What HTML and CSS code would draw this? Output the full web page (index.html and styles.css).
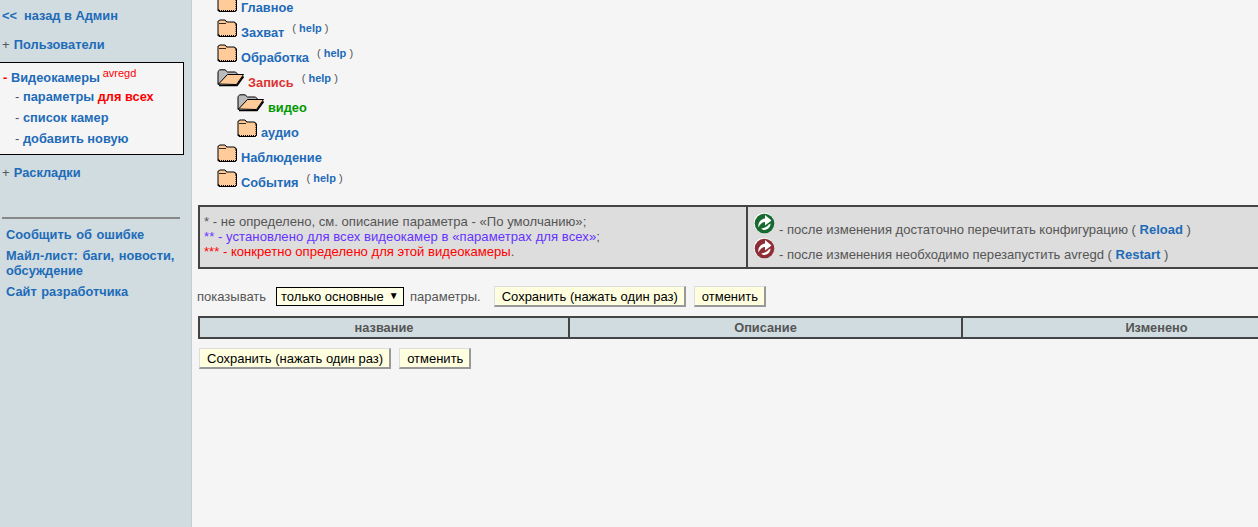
FILE: index.html
```html
<!DOCTYPE html>
<html lang="ru">
<head>
<meta charset="utf-8">
<title>Видеокамеры</title>
<link rel="stylesheet" href="styles.css">
</head>
<body>
<svg class="defs" width="0" height="0">
  <symbol id="closed" viewBox="0 0 20 18">
    <path d="M2 17.500L1 16.500V2.500L2.500 1H8L10 3H17.500L19.500 5V16.500L18.500 17.500Z" fill="#000" stroke="#000" stroke-width="1"/>
    <path d="M1.500 15V2.800L2.800 1.500H7.800L9.800 3.500H17L18.500 5V15L17.800 16H2.500Z" fill="#fc9"/>
    <path d="M2 4.500H9" stroke="#000" stroke-width=".8" fill="none"/>
    <path d="M3 16.500H18.500V6" stroke="#fc9" stroke-width="1" stroke-dasharray="1 1" fill="none"/>
  </symbol>
  <symbol id="open" viewBox="0 0 27 18">
    <path d="M1 15.500V2.500L2.800 .8H8L10.500 3H18.500L21 5.500H11L3 14.500Z" fill="#bbb" stroke="#000"/>
    <path d="M1.500 15L10.500 5.500H26.500L19.500 15.500Z" fill="#fc9" stroke="#000"/>
    <path d="M2 16.500H20L26.500 7.500" stroke="#000" stroke-width="1.600" fill="none"/>
  </symbol>
  <symbol id="cycle" viewBox="0 0 22 22">
    <circle cx="11" cy="11" r="10.700" fill="#fff" stroke="#ccc" stroke-width=".6"/>
    <circle cx="11.500" cy="11.500" r="9.800" fill="currentColor"/>
    <path d="M5.500 15.500C4.500 10.500 8 6.800 12 6.500V3L18.500 8.500L12 13.500V10C9 10 7 12.500 5.500 15.500Z" fill="#fff"/>
    <path d="M17.500 11.500C17.500 15.500 14.500 18 10.500 18L8 16.800C11 16 14.500 14.800 15.500 12.800Z" fill="#fff"/>
  </symbol>
</svg>
<div class="page">
  <nav class="side">
    <div class="side-top"><a href="#">&lt;&lt;&nbsp; назад в Админ</a></div>
    <div class="side-item"><span class="mark">+</span> <a href="#">Пользователи</a></div>
    <div class="side-box">
      <div class="box-head"><span class="red-mark">-</span> <a href="#">Видеокамеры</a> <sup class="tag">avregd</sup></div>
      <div class="box-row"><span class="mark">-</span> <a href="#">параметры <b class="hot">для всех</b></a></div>
      <div class="box-row"><span class="mark">-</span> <a href="#">список камер</a></div>
      <div class="box-row"><span class="mark">-</span> <a href="#">добавить новую</a></div>
    </div>
    <div class="side-item side-last"><span class="mark">+</span> <a href="#">Раскладки</a></div>
    <hr class="side-rule">
    <ul class="side-links">
      <li><a href="#">Сообщить об ошибке</a></li>
      <li><a href="#">Майл-лист: баги, новости, обсуждение</a></li>
      <li><a href="#">Сайт разработчика</a></li>
    </ul>
  </nav>
  <main class="main">
    <ul class="tree">
      <li class="node"><svg class="fold"><use href="#closed"/></svg><a href="#">Главное</a></li>
      <li class="node"><svg class="fold"><use href="#closed"/></svg><a href="#">Захват</a><span class="help">( <a href="#">help</a> )</span></li>
      <li class="node"><svg class="fold"><use href="#closed"/></svg><a href="#">Обработка</a><span class="help">( <a href="#">help</a> )</span></li>
      <li class="node"><svg class="fold-open"><use href="#open"/></svg><a class="cur" href="#">Запись</a><span class="help">( <a href="#">help</a> )</span></li>
      <li class="node sub"><svg class="fold-open"><use href="#open"/></svg><a class="cur-sub" href="#">видео</a></li>
      <li class="node sub"><svg class="fold"><use href="#closed"/></svg><a href="#">аудио</a></li>
      <li class="node"><svg class="fold"><use href="#closed"/></svg><a href="#">Наблюдение</a></li>
      <li class="node"><svg class="fold"><use href="#closed"/></svg><a href="#">События</a><span class="help">( <a href="#">help</a> )</span></li>
    </ul>
    <div class="legend">
      <div class="legend-left">
        <div>* - не определено, см. описание параметра - «По умолчанию»;</div>
        <div><span class="violet">** - установлено для всех видеокамер в «параметрах для всех»</span>;</div>
        <div><span class="red">*** - конкретно определено для этой видеокамеры</span>.</div>
      </div>
      <div class="legend-right">
        <div class="legend-line"><svg class="cyc green"><use href="#cycle"/></svg><span>- после изменения достаточно перечитать конфигурацию ( <a href="#">Reload</a> )</span></div>
        <div class="legend-line"><svg class="cyc maroon"><use href="#cycle"/></svg><span>- после изменения необходимо перезапустить avregd ( <a href="#">Restart</a> )</span></div>
      </div>
    </div>
    <div class="controls">
      <span>показывать</span>
      <span class="select">только основные<span class="arrow">▼</span></span>
      <span class="after">параметры.</span>
      <button class="btn btn-gap">Сохранить (нажать один раз)</button>
      <button class="btn">отменить</button>
    </div>
    <div class="thead">
      <div class="th th1">название</div>
      <div class="th th2">Описание</div>
      <div class="th th3">Изменено</div>
    </div>
    <div class="bottom">
      <button class="btn">Сохранить (нажать один раз)</button>
      <button class="btn">отменить</button>
    </div>
  </main>
</div>
</body>
</html>
```
FILE: styles.css
```css
* { box-sizing: border-box; }
html, body { margin: 0; height: 527px; overflow: hidden; }
body {
  background: #f5f5f5;
  color: #555;
  font-family: "Liberation Sans", Arial, sans-serif;
  font-size: 13px;
}
.defs { position: absolute; }
a { color: #1e6bb8; font-size: 12.8px; font-weight: bold; text-decoration: none; }
.page { display: flex; height: 527px; width: 1352px; }

.side {
  flex: 0 0 192px;
  background: #d0dce0;
  border-right: 1px solid #c4ced2;
  padding: 8px 0 0 0;
}
.side-top { padding-left: 2px; line-height: 15px; }
.side-item { padding-left: 2px; line-height: 15px; margin-top: 14px; }
.side-last { margin-top: 10px; }
.mark { color: #555; }
.side-item .mark { margin-right: .6px; }
.side-box {
  margin: 10px 0 0 -1px;
  width: 185px;
  height: 93px;
  background: #f5f5f5;
  border: 1px solid #000;
  padding: 7px 0 0 3px;
}
.box-head { line-height: 15px; white-space: nowrap; }
.red-mark { color: #f00; font-weight: bold; }
.tag { color: #f00; font-size: 11px; line-height: 0; vertical-align: 5px; font-weight: normal; }
.box-head a { margin-right: -1px; }
.box-row { padding-left: 12px; line-height: 15px; margin-top: 6px; }
.box-head + .box-row { margin-top: 4px; }
.hot { color: #f00; }
.side-rule { margin: 37px 11px 0 2px; height: 2px; border: 0; background: #888; }
.side-links { list-style: none; margin: 8px 0 0; padding: 0 10px 0 6px; word-spacing: 1px; }
.side-links li { line-height: 15px; margin-bottom: 6px; }

.main { flex: 1; padding-left: 5px; min-width: 0; }
.tree { list-style: none; margin: -8px 0 0; padding: 0 0 0 20px; }
.node { display: flex; align-items: flex-end; height: 25px; white-space: nowrap; }
.node > a { line-height: 15px; margin-bottom: 2px; }
.sub { padding-left: 20px; }
.fold { width: 20px; height: 18px; margin-right: 4px; margin-bottom: 5px; flex: none; }
.fold-open { width: 27px; height: 18px; margin-right: 4px; margin-bottom: 5px; flex: none; }
.cur { color: #d33; }
.cur-sub { color: #090; }
.help { font-size: 11px; margin-left: 8px; margin-bottom: 7px; line-height: 13px; }
.help a { font-size: 11px; }

.legend {
  display: flex;
  margin: 13px 0 0 1px;
  width: 1154px;
  height: 64px;
  background: #ddd;
  border: 2px solid #444;
  font-size: 13.1px;
}
.legend-left {
  flex: 0 0 548px;
  border-right: 2px solid #444;
  padding: 7px 0 0 4px;
  line-height: 15px;
}
.violet { color: #6633ff; letter-spacing: .05px; }
.red { color: #f00; }
.legend-right { padding: 2px 0 0 5px; font-size: 13.07px; }
.legend-line { display: flex; align-items: flex-end; height: 25px; white-space: nowrap; }
.cyc { width: 22px; height: 22px; flex: none; margin-right: 4px; }
.legend-line span { margin-bottom: -4px; line-height: 16px; }
.legend-line a { font-size: 13px; }
.green { color: #17692f; }
.maroon { color: #8e2c36; }

.controls { display: flex; align-items: center; margin-top: 17px; height: 21px; white-space: nowrap; }
.select {
  display: flex;
  align-items: center;
  width: 128px;
  height: 19px;
  margin-left: 10px;
  padding-left: 4px;
  background: #ffffe6;
  border: 1px solid #000;
  color: #000;
}
.arrow { font-size: 10px; margin-left: 5px; margin-bottom: 3px; }
.after { margin-left: 6px; }
.btn {
  height: 21px;
  padding: 0 6px 0 7px;
  margin: 0;
  background: #ffffe0;
  color: #000;
  font: 13px "Liberation Sans", Arial, sans-serif;
  border: 1px solid #ddd;
  border-right: 2px solid #999;
  border-bottom: 2px solid #999;
  white-space: nowrap;
}
.btn-gap { margin-left: 13px; margin-right: 8px; }

.thead {
  display: flex;
  margin: 9px 0 0 1px;
  width: 1154px;
  height: 23px;
  background: #d0dce0;
  border: 2px solid #444;
  font-size: 12.8px;
}
.th { text-align: center; font-weight: bold; line-height: 19px; color: #555; }
.th1 { flex: 0 0 370px; border-right: 2px solid #444; }
.th2 { flex: 0 0 393px; border-right: 2px solid #444; }
.th3 { flex: 1; }

.bottom { display: flex; gap: 8px; margin: 9px 0 0 2px; }
```
